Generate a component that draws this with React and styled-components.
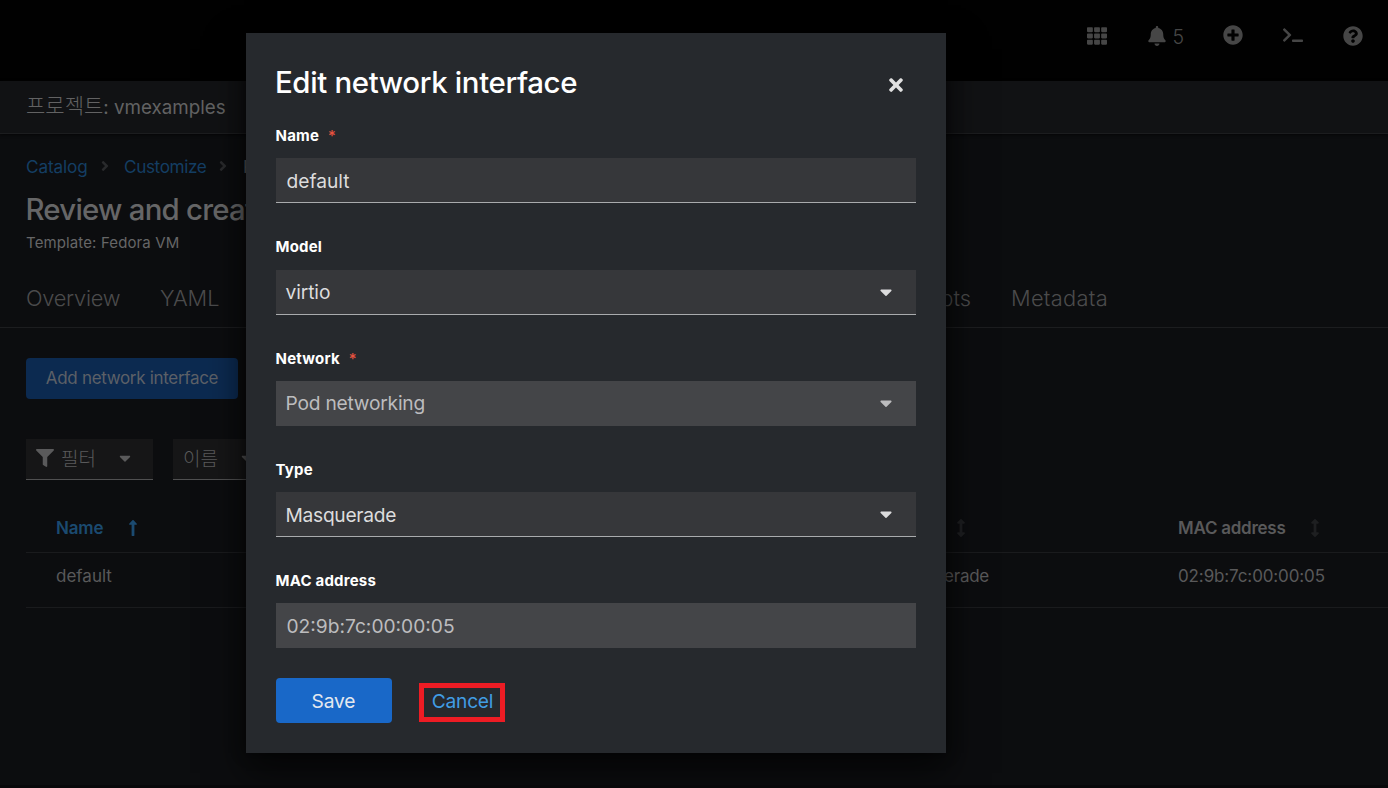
import React from "react";
import styled, { createGlobalStyle } from "styled-components";
import {
  FaTh, FaBell, FaPlusCircle, FaTerminal, FaQuestionCircle, FaAngleRight,
  FaFilter, FaCaretDown, FaLongArrowAltUp, FaArrowsAltV, FaTimes,
} from "react-icons/fa";

const Global = createGlobalStyle`
  * { box-sizing: border-box; }
  html, body, #root { margin: 0; height: 100%; overflow: hidden; }
  body {
    background: #0c0d0f;
    font-family: Inter, "Noto Sans CJK KR", sans-serif;
    color: #59595a;
  }
  svg { display: block; flex: none; }
`;

const Page = styled.div`
  position: relative;
  height: 788px;
  display: flex;
  flex-direction: column;
  overflow: hidden;
  border-bottom: 3px solid #08080a;
`;

const Masthead = styled.header`
  flex: none;
  height: 81px;
  padding: 0 25px 9px 0;
  display: flex;
  align-items: center;
  justify-content: flex-end;
  background: #010101;
  color: #464646;
  font-size: 20px;
`;

const Tool = styled.div`
  display: flex;
  align-items: center;
  gap: 5px;
  margin-left: ${(p) => p.$gap}px;
  padding-bottom: ${(p) => p.$lift || 0}px;
`;

const Count = styled.span`
  font-size: 19.5px;
  font-weight: 300;
  line-height: 20px;
  padding-top: 2px;
`;

const ProjectBar = styled.div`
  flex: none;
  height: 53px;
  padding: 0 26px;
  display: flex;
  align-items: center;
  background: #111214;
  border-bottom: 1px solid #1c1d1f;
  box-shadow: 0 1px 3px #060607;
  color: #626263;
  font-size: 18.8px;
`;

const ProjectName = styled.span`
  padding-top: 1px;
  line-height: 24px;
`;

const Hangul = styled.span`
  font-family: "Noto Sans CJK KR", sans-serif;
  font-weight: 300;
  font-size: ${(p) => p.$size}px;
  line-height: 24px;
  padding-bottom: ${(p) => p.$lift || 0}px;
`;

const Breadcrumb = styled.nav`
  display: flex;
  align-items: center;
  height: 24px;
  margin: 20px 26px 1px;
  font-size: 17.2px;
  color: #626263;
  white-space: nowrap;

  svg { font-size: 16px; color: #292a2c; margin: 0 11.5px 0 9px; }
`;

const Crumb = styled.a`
  color: #143e63;
  letter-spacing: ${(p) => p.$ls}px;
`;

const Title = styled.h1`
  margin: 11px 26px 0 25.5px;
  height: 40px;
  line-height: 40px;
  font-size: 29.4px;
  font-weight: 500;
  letter-spacing: -0.77px;
  color: #666667;
  white-space: nowrap;
`;

const Template = styled.div`
  margin: 3px 26px 0;
  height: 20px;
  line-height: 20px;
  font-size: 15px;
  letter-spacing: 0.12px;
  color: #666667;
`;

const Tabs = styled.div`
  flex: none;
  display: grid;
  grid-template-columns: 94px 59px 712px 100px;
  column-gap: 40px;
  align-items: center;
  height: 57px;
  margin-top: 18px;
  padding: 0 26px 2px;
  border-bottom: 1px solid #1c1d1f;
  font-size: 21.8px;
  font-weight: 300;
  color: #4b4b4c;
  margin-bottom: 30px;
`;

const Tab = styled.span`
  text-align: ${(p) => p.$align || "left"};
  letter-spacing: ${(p) => p.$ls || 0}px;
`;

const AddButton = styled.button`
  flex: none;
  width: 212px;
  height: 41px;
  margin-left: 26px;
  padding: 0 0 2px;
  border: 0;
  border-radius: 4px;
  background: #0c2a50;
  color: #5c6067;
  font: 17px Inter, sans-serif;
  letter-spacing: -0.32px;
  white-space: nowrap;
`;

const Toolbar = styled.div`
  display: flex;
  gap: 20px;
  margin: 40px 26px 0;
`;

const Filter = styled.div`
  display: flex;
  align-items: center;
  width: ${(p) => p.$w}px;
  height: 41px;
  padding: 0 19px 2px 10px;
  background: #161617;
  border-bottom: 1px solid #505051;
  color: #5a5a5b;
  font-size: 18px;
`;

const FilterText = styled(Hangul)`
  margin: 0 auto 0 ${(p) => p.$left}px;
`;

const Table = styled.div`
  margin: 22px 0 0 26px;
  font-size: 17px;
`;

const Row = styled.div`
  display: grid;
  grid-template-columns: 835px 287px 1fr;
  align-items: center;
  height: ${(p) => p.$h}px;
  padding: ${(p) => p.$pt || 0}px 0 ${(p) => p.$pb || 0}px 30px;
  border-bottom: 1px solid #1a1b1d;
  font-weight: ${(p) => (p.$head ? 600 : 400)};
`;

const Cell = styled.div`
  display: flex;
  align-items: center;
  gap: ${(p) => p.$gap || 0}px;
  color: ${(p) => p.$color || "#59595a"};
  letter-spacing: ${(p) => p.$ls || 0}px;

  svg { color: ${(p) => p.$icon || "inherit"}; font-size: 18px; }
`;

const Backdrop = styled.div`
  position: absolute;
  inset: 0;
  padding: 33px 0 0 246px;
`;

const Modal = styled.section`
  width: 700px;
  height: 720px;
  padding: 30px;
  display: flex;
  flex-direction: column;
  background: #26292d;
  box-shadow: 0 18px 36px 2px rgba(0, 0, 0, 0.6), 0 0 12px rgba(0, 0, 0, 0.5);
`;

const ModalHeader = styled.div`
  display: flex;
  justify-content: space-between;
  align-items: center;
  height: 40px;
  padding-right: 13px;
  color: #e0e0e0;
  font-size: 20px;

  svg { margin-top: 4px; width: 14px; }
`;

const ModalTitle = styled.h2`
  margin: 0 0 0 -1px;
  font-size: 29.4px;
  font-weight: 500;
  letter-spacing: -0.35px;
  color: #fff;
  line-height: 40px;
`;

const Form = styled.div`
  display: flex;
  flex-direction: column;
  gap: 29.25px;
  margin-top: 18.25px;
`;

const Label = styled.label`
  display: block;
  height: 30px;
  line-height: 30px;
  margin: 0 0 7px -0.5px;
  font-size: 15px;
  font-weight: 700;
  letter-spacing: 0.2px;
  color: #fff;
`;

const LabelText = styled.span`
  position: relative;
  top: ${(p) => p.$shift || 0}px;
`;

const Required = styled.span`
  margin-left: 9px;
  color: #e8523f;
  font-weight: 500;
`;

const Control = styled.div`
  display: flex;
  align-items: center;
  justify-content: space-between;
  height: 45px;
  padding: 0 24px 0 ${(p) => p.$left}px;
  background: ${(p) => (p.$disabled ? "#444548" : "#36373a")};
  border-bottom: 1px solid ${(p) => (p.$disabled ? "#444548" : "#a9abad")};
  color: ${(p) => (p.$disabled ? "#bcbcbe" : "#dcdcdd")};
  font-size: 19.2px;
  letter-spacing: ${(p) => p.$ls || 0}px;

  svg { width: 12px; height: 20px; }
`;

const Value = styled.span`
  padding-top: ${(p) => p.$drop || 0}px;
`;

const Actions = styled.div`
  display: flex;
  align-items: center;
  margin-top: 29.75px;
`;

const Save = styled.button`
  width: 116px;
  height: 45px;
  border: 0;
  border-radius: 4px;
  background: #1968c8;
  color: #e4e8ef;
  font: 19.2px Inter, sans-serif;
  letter-spacing: -0.15px;
  padding: 0 1px 0 0;
`;

const Cancel = styled.button`
  width: 86px;
  height: 39px;
  margin: 4px 0 0 27px;
  padding: 0 0 3px 1px;
  border: 5px solid #ed1c24;
  background: transparent;
  color: #419de4;
  font: 19.2px Inter, sans-serif;
  letter-spacing: -0.25px;
`;

const fields = [
  { label: "Name", value: "default", required: true, drop: 2 },
  { label: "Model", value: "virtio", select: true, ls: -0.1, shift: -1 },
  { label: "Network", value: "Pod networking", required: true, select: true, disabled: true, ls: -0.22 },
  { label: "Type", value: "Masquerade", select: true, ls: -0.28, drop: 2 },
  { label: "MAC address", value: "02:9b:7c:00:00:05", disabled: true, drop: 2 },
];

export default function App() {
  return (
    <Page>
      <Global />
      <Masthead>
        <Tool><FaTh /></Tool>
        <Tool $gap={40}><FaBell /><Count>5</Count></Tool>
        <Tool $gap={39} $lift={2}><FaPlusCircle /></Tool>
        <Tool $gap={40} $lift={2}><FaTerminal /></Tool>
        <Tool $gap={40}><FaQuestionCircle /></Tool>
      </Masthead>
      <ProjectBar>
        <Hangul $size={21} $lift={6}>프로젝트</Hangul>
        <ProjectName>: vmexamples</ProjectName>
      </ProjectBar>
      <Breadcrumb>
        <Crumb $ls={-0.15}>Catalog</Crumb><FaAngleRight />
        <Crumb $ls={-0.4}>Customize</Crumb><FaAngleRight />
        <span>R</span>
      </Breadcrumb>
      <Title>Review and create</Title>
      <Template>Template: Fedora VM</Template>
      <Tabs>
        <Tab $ls={-0.25}>Overview</Tab>
        <Tab>YAML</Tab>
        <Tab $align="right">Scripts</Tab>
        <Tab $ls={0.3}>Metadata</Tab>
      </Tabs>
      <AddButton>Add network interface</AddButton>
      <Toolbar>
        <Filter $w={127}>
          <FaFilter /><FilterText $size={19} $left={7}>필터</FilterText><FaCaretDown />
        </Filter>
        <Filter $w={102}>
          <FilterText $size={19} $left={0}>이름</FilterText><FaCaretDown />
        </Filter>
      </Toolbar>
      <Table>
        <Row $head $h={51} $pt={2}>
          <Cell $color="#1b4a70" $gap={20.5} $ls={-0.15}>Name <FaLongArrowAltUp /></Cell>
          <Cell $icon="#1e1f21" $gap={20.5}>Type <FaArrowsAltV /></Cell>
          <Cell $icon="#1e1f21" $gap={20} $ls={-0.25}>MAC address <FaArrowsAltV /></Cell>
        </Row>
        <Row $h={55} $pb={8}>
          <Cell>default</Cell>
          <Cell $ls={-0.25}>Masquerade</Cell>
          <Cell $ls={-0.12}>02:9b:7c:00:00:05</Cell>
        </Row>
      </Table>
      <Backdrop>
        <Modal>
          <ModalHeader>
            <ModalTitle>Edit network interface</ModalTitle>
            <FaTimes />
          </ModalHeader>
          <Form>
            {fields.map((f) => (
              <div key={f.label}>
                <Label>
                  <LabelText $shift={f.shift}>{f.label}</LabelText>
                  {f.required && <Required>*</Required>}
                </Label>
                <Control $left={f.select ? 9.5 : 10.5} $disabled={f.disabled} $ls={f.ls}>
                  <Value $drop={f.drop}>{f.value}</Value>{f.select && <FaCaretDown />}
                </Control>
              </div>
            ))}
          </Form>
          <Actions>
            <Save>Save</Save>
            <Cancel>Cancel</Cancel>
          </Actions>
        </Modal>
      </Backdrop>
    </Page>
  );
}
